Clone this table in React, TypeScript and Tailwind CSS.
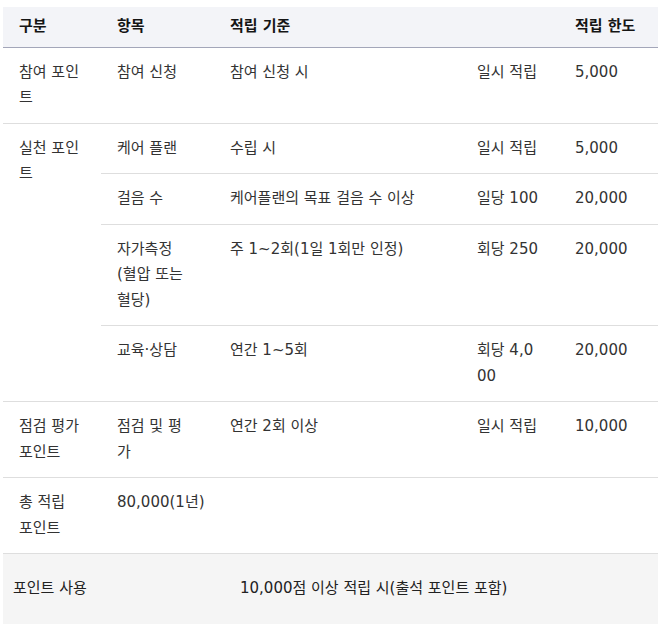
import React from "react";

type Row = {
  group?: string;
  span?: number;
  item: string;
  basis: string;
  unit: string;
  limit: string;
};

const rows: Row[] = [
  { group: "참여 포인트", span: 1, item: "참여 신청", basis: "참여 신청 시", unit: "일시 적립", limit: "5,000" },
  { group: "실천 포인트", span: 4, item: "케어 플랜", basis: "수립 시", unit: "일시 적립", limit: "5,000" },
  { item: "걸음 수", basis: "케어플랜의 목표 걸음 수 이상", unit: "일당 100", limit: "20,000" },
  { item: "자가측정 (혈압 또는 혈당)", basis: "주 1~2회(1일 1회만 인정)", unit: "회당 250", limit: "20,000" },
  { item: "교육·상담", basis: "연간 1~5회", unit: "회당 4,000", limit: "20,000" },
  { group: "점검 평가 포인트", span: 1, item: "점검 및 평가", basis: "연간 2회 이상", unit: "일시 적립", limit: "10,000" },
];

const cell = "py-3 align-top border-b border-[#dedede] break-all";
const c1 = `${cell} pl-4 pr-[19px]`;
const c2 = `${cell} pl-4 pr-[25px]`;
const c3 = `${cell} pl-4 pr-4`;
const c4 = `${cell} pl-4 pr-[19px]`;
const c5 = `${cell} pl-4 pr-2`;

export default function App() {
  return (
    <div
      className="bg-white pt-[7px] pl-[3px] text-[15px] leading-[25.5px] text-[#333]"
      style={{ fontFamily: '"DejaVu Sans", "Noto Sans CJK KR", sans-serif' }}
    >
      <table className="w-[655px] table-fixed border-collapse">
        <colgroup>
          <col className="w-[98px]" />
          <col className="w-[113px]" />
          <col className="w-[247px]" />
          <col className="w-[98px]" />
          <col className="w-[99px]" />
        </colgroup>
        <thead>
          <tr className="bg-[#f3f4f8] border-b border-[#a3a6b9] text-left text-[#151515]">
            <th className="pl-4 py-[7px] font-bold">구분</th>
            <th className="pl-4 py-[7px] font-bold">항목</th>
            <th className="pl-4 py-[7px] font-bold">적립 기준</th>
            <th className="pl-4 py-[7px]" />
            <th className="pl-4 py-[7px] font-bold whitespace-nowrap">적립 한도</th>
          </tr>
        </thead>
        <tbody>
          {rows.map((r, i) => (
            <tr key={i}>
              {r.group && (
                <td rowSpan={r.span} className={c1}>
                  {r.group}
                </td>
              )}
              <td className={c2}>{r.item}</td>
              <td className={c3}>{r.basis}</td>
              <td className={c4}>{r.unit}</td>
              <td className={c5}>{r.limit}</td>
            </tr>
          ))}
          <tr>
            <td className={c1}>총 적립 포인트</td>
            <td colSpan={4} className={c2}>
              80,000(1년)
            </td>
          </tr>
        </tbody>
      </table>

      {/* 포인트 사용 */}
      <div className="flex w-[655px] items-center bg-[#f5f5f5] py-[22px] text-[#222]">
        <div className="w-[237px] pl-[10px]">포인트 사용</div>
        <div>10,000점 이상 적립 시(출석 포인트 포함)</div>
      </div>
    </div>
  );
}
